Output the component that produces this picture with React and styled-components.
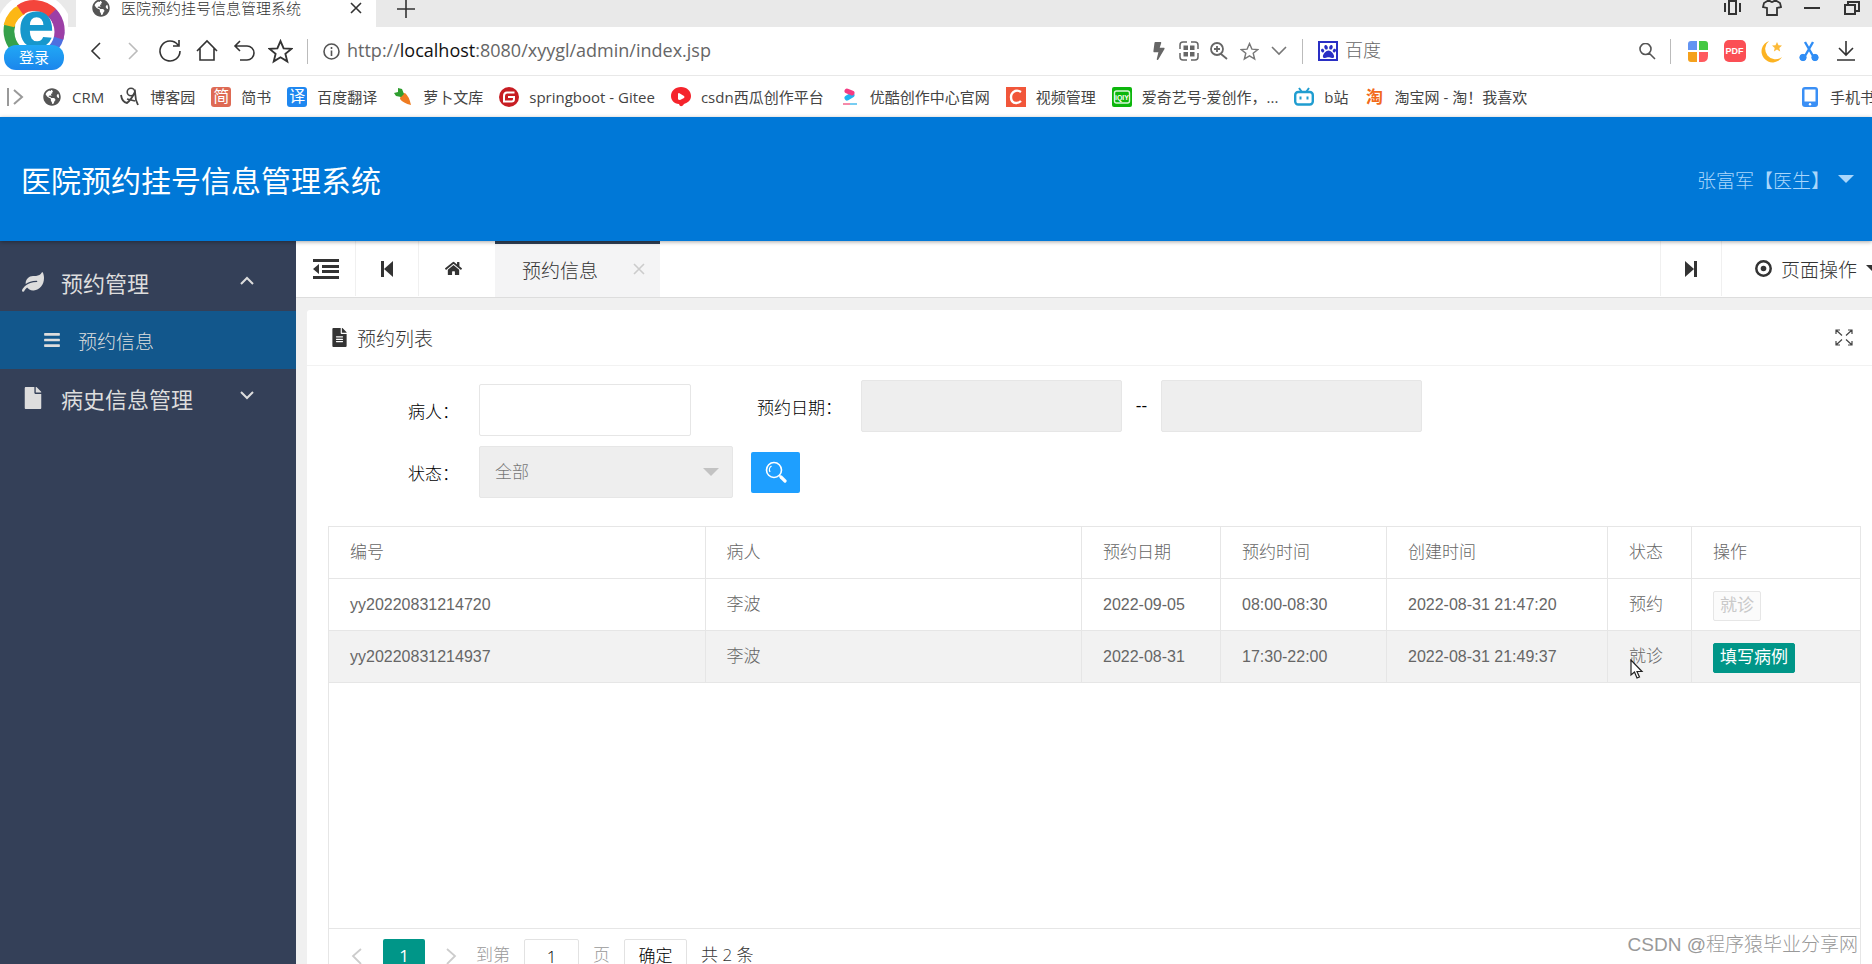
import React from "react";
import styled, { createGlobalStyle } from "styled-components";
import {
  FaBars,
  FaBolt,
  FaFile,
  FaFileAlt,
  FaGlobeAmericas,
  FaHome,
  FaLeaf,
  FaPaw,
} from "react-icons/fa";

const COLUMNS = [
  { key: "no", title: "编号", numeric: true },
  { key: "patient", title: "病人" },
  { key: "date", title: "预约日期", width: 139, numeric: true },
  { key: "time", title: "预约时间", width: 166, numeric: true },
  { key: "created", title: "创建时间", width: 221, numeric: true },
  { key: "status", title: "状态", width: 84 },
];

const APPOINTMENTS = [
  {
    no: "yy20220831214720",
    patient: "李波",
    date: "2022-09-05",
    time: "08:00-08:30",
    created: "2022-08-31 21:47:20",
    status: "预约",
    action: "就诊",
    disabled: true,
  },
  {
    no: "yy20220831214937",
    patient: "李波",
    date: "2022-08-31",
    time: "17:30-22:00",
    created: "2022-08-31 21:49:37",
    status: "就诊",
    action: "填写病例",
    active: true,
  },
];

const BOOKMARKS = [
  { label: "CRM", icon: <FaGlobeAmericas size={18} color="#555" /> },
  { label: "博客园", icon: <CnblogsIcon /> },
  { label: "简书", badge: "简", color: "#de6a54" },
  { label: "百度翻译", badge: "译", color: "#1e87f0" },
  { label: "萝卜文库", icon: <CarrotIcon /> },
  { label: "springboot - Gitee", icon: <GiteeIcon /> },
  { label: "csdn西瓜创作平台", icon: <XiguaIcon /> },
  { label: "优酷创作中心官网", icon: <YoukuIcon /> },
  { label: "视频管理", icon: <CsdnIcon /> },
  { label: "爱奇艺号-爱创作，...", icon: <IqiyiIcon /> },
  { label: "b站", icon: <BiliIcon /> },
  { label: "淘宝网 - 淘！我喜欢", icon: <TaobaoIcon /> },
];

export default function App() {
  return (
    <>
      <GlobalStyle />
      <Window>
        <BrowserBar />
        <Header>
          <Title>医院预约挂号信息管理系统</Title>
          <UserButton type="button">
            张富军【医生】
            <Caret $color="#a9d6fb" />
          </UserButton>
        </Header>
        <Body>
          <Sidebar />
          <Main>
            <PageTabs />
            <Card>
              <CardHeader>
                <FaFileAlt size={19} />
                <CardTitle>预约列表</CardTitle>
                <button type="button" aria-label="全屏">
                  <ExpandIcon />
                </button>
              </CardHeader>
              <SearchForm />
              <AppointmentTable />
            </Card>
          </Main>
        </Body>
        <Watermark>CSDN @程序猿毕业分享网</Watermark>
      </Window>
    </>
  );
}

function BrowserBar() {
  return (
    <Browser>
      <TabStrip>
        <BrowserTab>
          <FaGlobeAmericas size={18} color="#555" />
          <TabTitle>医院预约挂号信息管理系统</TabTitle>
          <TabClose type="button" aria-label="关闭标签页">
            <CloseIcon size={12} />
          </TabClose>
        </BrowserTab>
        <NewTab type="button" aria-label="新标签页">
          <Line size={18} d="M9 0V18M0 9H18" />
        </NewTab>
        <WindowButtons>
          <ToolButton type="button" $width={40} aria-label="分屏">
            <Line size={17} w={2} d="M5 2H12V15H5ZM1 4V13M16 4V13" />
          </ToolButton>
          <ToolButton type="button" $width={40} aria-label="皮肤">
            <Line
              size={20}
              w={1.8}
              d="M7 2Q10 6 13 2L18 5L19 9L15 10V17H5V10L1 9L2 5Z"
            />
          </ToolButton>
          <ToolButton type="button" $width={40} aria-label="最小化">
            <Line size={16} w={2} d="M0 8H16" />
          </ToolButton>
          <ToolButton type="button" $width={40} aria-label="还原">
            <Line size={16} w={2} d="M1 5H11V14H1ZM4 5V2H15V11H11" />
          </ToolButton>
        </WindowButtons>
      </TabStrip>

      <AddressRow>
        <ToolButton type="button" aria-label="后退">
          <Line size={20} d="M14 2L6 10L14 18" />
        </ToolButton>
        <ToolButton type="button" aria-label="前进" $color="#bbb">
          <Line size={20} d="M6 2L14 10L6 18" />
        </ToolButton>
        <ToolButton type="button" aria-label="刷新">
          <Line size={24} d="M20 6A10 10 0 1 0 22 12M21 1V7H15" />
        </ToolButton>
        <ToolButton type="button" aria-label="主页">
          <Line size={24} d="M2 12L12 2L22 12M5 9V21H19V9" />
        </ToolButton>
        <ToolButton type="button" aria-label="恢复">
          <Line size={24} d="M8 2L3 7L8 12M3 7H15A7 7 0 0 1 15 21H8" />
        </ToolButton>
        <ToolButton type="button" aria-label="收藏">
          <StarIcon size={25} />
        </ToolButton>
        <Divider />
        <InfoIcon />
        <Address role="textbox" aria-label="地址">
          http://<b>localhost</b>:8080/xyygl/admin/index.jsp
        </Address>
        <ToolButton type="button" $width={30} $color="#666" aria-label="极速">
          <FaBolt size={18} />
        </ToolButton>
        <ToolButton type="button" $width={30} $color="#666" aria-label="二维码">
          <QrIcon />
        </ToolButton>
        <ToolButton type="button" $width={30} $color="#666" aria-label="缩放">
          <Line
            size={18}
            w={1.8}
            d="M13 7A6 6 0 1 1 1 7A6 6 0 1 1 13 7M11 12L17 17M4 7H10M7 4V10"
          />
        </ToolButton>
        <ToolButton type="button" $width={30} $color="#777" aria-label="星标">
          <StarIcon size={19} />
        </ToolButton>
        <ToolButton type="button" $width={30} $color="#777" aria-label="更多">
          <Line size={16} d="M1 4L8 11L15 4" />
        </ToolButton>
        <Divider />
        <BaiduBadge>
          <FaPaw size={15} />
        </BaiduBadge>
        <EngineInput aria-label="搜索" placeholder="百度" />
        <ToolButton type="button" $width={30} $color="#555" aria-label="搜索">
          <Line size={17} d="M12 6A5 5 0 1 1 1 6A5 5 0 1 1 12 6M10 10L16 16" />
        </ToolButton>
        <Divider $tight />
        <ToolButton type="button" aria-label="应用">
          <AppsIcon />
        </ToolButton>
        <ToolButton type="button" aria-label="PDF">
          <PdfMark>PDF</PdfMark>
        </ToolButton>
        <ToolButton type="button" aria-label="夜间模式">
          <MoonIcon />
        </ToolButton>
        <ToolButton type="button" aria-label="截图">
          <ScissorsIcon />
        </ToolButton>
        <ToolButton type="button" aria-label="下载">
          <Line size={22} d="M11 1V15M4 8L11 15L18 8M2 20H20" />
        </ToolButton>
      </AddressRow>

      <BookmarkRow>
        <Line size={20} w={2} color="#999" d="M2 1V19M8 3L16 10L8 17" />
        {BOOKMARKS.map((item) => (
          <Bookmark key={item.label} href="#">
            <BookmarkIcon>
              {item.badge ? (
                <Badge $color={item.color}>{item.badge}</Badge>
              ) : (
                item.icon
              )}
            </BookmarkIcon>
            {item.label}
          </Bookmark>
        ))}
        <PhoneBookmark href="#">
          <BookmarkIcon>
            <PhoneIcon />
          </BookmarkIcon>
          手机书签
        </PhoneBookmark>
      </BookmarkRow>

      <Login type="button">
        <BrowserLogo />
        <LoginLabel>登录</LoginLabel>
      </Login>
    </Browser>
  );
}

function Sidebar() {
  return (
    <Side>
      <SideItem href="#">
        <FaLeaf size={22} />
        <span>预约管理</span>
        <Line size={14} w={2} d="M1 9L7 3L13 9" />
      </SideItem>
      <SubItem href="#">
        <FaBars size={18} />
        <span>预约信息</span>
      </SubItem>
      <SideItem href="#">
        <FaFile size={22} />
        <span>病史信息管理</span>
        <Line size={14} w={2} d="M1 1L7 7L13 1" />
      </SideItem>
    </Side>
  );
}

function PageTabs() {
  return (
    <TabBar>
      <TabCell type="button" $width={60} aria-label="收起菜单">
        <svg width="26" height="20" viewBox="0 0 26 20" fill="currentColor">
          <path d="M0 0H26V3H0ZM9 6H26V9H9ZM9 11H26V14H9ZM0 17H26V20H0ZM6 5V15L0 10Z" />
        </svg>
      </TabCell>
      <TabCell type="button" $width={63} aria-label="上一个">
        <svg width="12" height="16" viewBox="0 0 12 16" fill="currentColor">
          <path d="M0 0H3V16H0ZM12 0V16L3 8Z" />
        </svg>
      </TabCell>
      <TabCell type="button" $width={68} $plain aria-label="首页">
        <FaHome size={17} />
      </TabCell>
      <ActiveTab>
        预约信息
        <button type="button" aria-label="关闭">
          <CloseIcon size={12} />
        </button>
      </ActiveTab>
      <Spacer />
      <TabCell type="button" $width={62} $left aria-label="下一个">
        <svg width="12" height="16" viewBox="0 0 12 16" fill="currentColor">
          <path d="M9 0H12V16H9ZM0 0L9 8L0 16Z" />
        </svg>
      </TabCell>
      <PageActions type="button">
        <svg width="17" height="17" viewBox="0 0 17 17">
          <circle cx="8.5" cy="8.5" r="7.2" fill="none" stroke="#333" strokeWidth="2.5" />
          <circle cx="8.5" cy="8.5" r="2.8" fill="#333" />
        </svg>
        <span>页面操作</span>
        <Caret $color="#333" />
      </PageActions>
    </TabBar>
  );
}

function SearchForm() {
  return (
    <Form>
      <FormRow>
        <Field $low>
          <Label htmlFor="patient">病人：</Label>
          <PatientInput id="patient" />
        </Field>
        <Field>
          <DateLabel htmlFor="start">预约日期：</DateLabel>
          <DateInput id="start" readOnly />
          <Dash>--</Dash>
          <DateInput id="end" readOnly aria-label="结束日期" />
        </Field>
      </FormRow>
      <FormRow>
        <Field>
          <Label htmlFor="status">状态：</Label>
          <SelectWrap>
            <Select id="status">
              <option>全部</option>
            </Select>
            <Caret $color="#c2c2c2" />
          </SelectWrap>
          <SearchButton type="button" aria-label="查询">
            <svg width="22" height="22" viewBox="0 0 22 22" fill="none" stroke="#fff">
              <circle cx="9" cy="9" r="7.5" strokeWidth="1.6" />
              <path d="M5 11A4.5 4.5 0 0 1 6.5 5" strokeWidth="1.3" />
              <path d="M14.5 14.5L16 16" strokeWidth="1.5" />
              <path d="M16 16L20 20" strokeWidth="3.2" strokeLinecap="round" />
            </svg>
          </SearchButton>
        </Field>
      </FormRow>
    </Form>
  );
}

function AppointmentTable() {
  return (
    <TableBox>
      <Table>
        <colgroup>
          {COLUMNS.map((col) => (
            <col key={col.key} width={col.width} />
          ))}
          <col width="168" />
        </colgroup>
        <thead>
          <Row>
            {COLUMNS.map((col) => (
              <HeadCell key={col.key}>{col.title}</HeadCell>
            ))}
            <HeadCell>操作</HeadCell>
          </Row>
        </thead>
        <tbody>
          {APPOINTMENTS.map((item) => (
            <Row key={item.no} $active={item.active}>
              {COLUMNS.map((col) => (
                <Cell key={col.key} $numeric={col.numeric}>
                  {item[col.key]}
                  {item.active && col.key === "status" && <Pointer />}
                </Cell>
              ))}
              <Cell>
                <ActionButton type="button" disabled={item.disabled}>
                  {item.action}
                </ActionButton>
              </Cell>
            </Row>
          ))}
        </tbody>
      </Table>
      <Spacer />
      <Pager>
        <PageArrow type="button" aria-label="上一页">
          <Line size={18} w={1.8} d="M13 2L5 9L13 17" />
        </PageArrow>
        <CurrentPage type="button">1</CurrentPage>
        <PageArrow type="button" aria-label="下一页">
          <Line size={18} w={1.8} d="M5 2L13 9L5 17" />
        </PageArrow>
        <PageLabel htmlFor="page">到第</PageLabel>
        <PageInput id="page" defaultValue="1" />
        <PageLabel htmlFor="page">页</PageLabel>
        <ConfirmButton type="button">确定</ConfirmButton>
        <Total>共 2 条</Total>
      </Pager>
    </TableBox>
  );
}

/* icons */

function Line({ size, d, w = 1.6, color = "currentColor" }) {
  return (
    <svg
      width={size}
      height={size}
      viewBox={`0 0 ${size} ${size}`}
      fill="none"
      stroke={color}
      strokeWidth={w}
    >
      <path d={d} />
    </svg>
  );
}

function CloseIcon({ size }) {
  const end = size - 1;
  return <Line size={size} d={`M1 1L${end} ${end}M${end} 1L1 ${end}`} />;
}

function StarIcon({ size }) {
  return (
    <svg width={size} height={size} viewBox="0 0 24 24" fill="none" stroke="currentColor" strokeWidth="1.8">
      <path d="M12 2L15 9L22.5 9.5L16.7 14.3L18.5 21.5L12 17.5L5.5 21.5L7.3 14.3L1.5 9.5L9 9Z" />
    </svg>
  );
}

function InfoIcon() {
  return (
    <svg width="17" height="17" viewBox="0 0 17 17" fill="none" stroke="#555" strokeWidth="1.6">
      <circle cx="8.5" cy="8.5" r="7.5" />
      <path d="M8.5 7.5V13M8.5 4V6" />
    </svg>
  );
}

function QrIcon() {
  return (
    <svg width="20" height="20" viewBox="0 0 20 20" fill="none" stroke="currentColor" strokeWidth="1.5">
      <path d="M1 8V4Q1 1 4 1H8M12 1H16Q19 1 19 4V8M19 12V16Q19 19 16 19H12M8 19H4Q1 19 1 16V12" />
      <path
        d="M4.5 4.5H9V9H4.5ZM11 4.5H15.5V9H11ZM4.5 11H9V15.5H4.5ZM11 11H15.5V15.5H11Z"
        fill="currentColor"
        stroke="none"
      />
    </svg>
  );
}

function AppsIcon() {
  return (
    <svg width="20" height="21" viewBox="0 0 20 21">
      <path d="M3 0H9V9H0V3Q0 0 3 0Z" fill="#6394f2" />
      <path d="M11 0H17Q20 0 20 3V9H11Z" fill="#45c843" />
      <path d="M0 11H9V21H3Q0 21 0 18Z" fill="#f5a11c" />
      <path d="M11 11H20V15Q20 21 14 21H11Z" fill="#ff5a5f" />
    </svg>
  );
}

function MoonIcon() {
  return (
    <svg width="22" height="23" viewBox="0 0 22 23" fill="#fcb322">
      <path d="M8 1A11 11 0 1 0 21 17A9.5 9.5 0 0 1 8 1Z" />
      <path
        d="M16 2L17.5 5.3L21 5.6L18.3 8L19.2 11.5L16 9.6L12.9 11.5L13.7 8L11 5.600L14.5 5.3Z"
        opacity=".9"
      />
    </svg>
  );
}

function ScissorsIcon() {
  return (
    <svg width="20" height="21" viewBox="0 0 20 21" fill="#2f8df5" stroke="#2f8df5">
      <path d="M6 1L14 15M14 1L6 15" strokeWidth="2.4" />
      <circle cx="4" cy="16.5" r="3.2" />
      <circle cx="16" cy="16.5" r="3.2" />
    </svg>
  );
}

function CnblogsIcon() {
  return (
    <svg width="20" height="20" viewBox="0 0 20 20" fill="none" stroke="#444">
      <circle cx="11" cy="5" r="3.8" strokeWidth="1.6" />
      <path d="M1 8Q2 15 7 16Q11 13 15 5L16 13L18 18M7 12L15 14" strokeWidth="1.8" />
    </svg>
  );
}

function CarrotIcon() {
  return (
    <svg width="18" height="18" viewBox="0 0 18 18">
      <path d="M7 6L11 5Q15 8 17 17Q9 15 6 11Z" fill="#ef7c22" />
      <path d="M7 9L2 8L0 5L4 4L4 0L8 1L10 6Z" fill="#2f9e2f" />
    </svg>
  );
}

function GiteeIcon() {
  return (
    <svg width="20" height="20" viewBox="0 0 20 20">
      <circle cx="10" cy="10" r="10" fill="#c71d23" />
      <path d="M15.5 5.5H8Q5 5.5 5 9V14.5H12.5Q15 14.5 15 12V10H9" fill="none" stroke="#fff" strokeWidth="2" />
    </svg>
  );
}

function XiguaIcon() {
  return (
    <svg width="20" height="20" viewBox="0 0 20 20">
      <path d="M10 0C16 0 20 4 20 9C20 14 16 16 13 17C11 20 9 20 8 17C3 17 0 13 0 9C0 4 4 0 10 0Z" fill="#f5242c" />
      <path d="M7 7Q7 6 8 6L13 9Q14 10 13 11L9 13Q7 13 7 12Z" fill="#fff" />
    </svg>
  );
}

function YoukuIcon() {
  return (
    <svg width="16" height="20" viewBox="0 0 16 20">
      <path d="M5 11L10 8" stroke="#22b3f0" strokeWidth="5" strokeLinecap="round" />
      <path d="M5 4L10 6" stroke="#f43b82" strokeWidth="5" strokeLinecap="round" />
      <path d="M1 17H8" stroke="#f58aaa" strokeWidth="2" />
      <path d="M8 17H15" stroke="#77cdf2" strokeWidth="2" />
    </svg>
  );
}

function CsdnIcon() {
  return (
    <svg width="20" height="20" viewBox="0 0 20 20">
      <rect width="20" height="20" fill="#f1563a" />
      <path d="M15 5Q12 3 9 4Q5 6 5 10Q5 16 10 16Q13 16 15 14" fill="none" stroke="#fff" strokeWidth="2.4" />
    </svg>
  );
}

function IqiyiIcon() {
  return (
    <svg width="20" height="20" viewBox="0 0 20 20">
      <rect width="20" height="20" rx="2" fill="#0cb60c" />
      <rect x="2.5" y="4" width="15" height="12" rx="2" fill="none" stroke="#d8f7d8" strokeWidth="1.4" />
      <text
        x="10"
        y="13"
        fontSize="7"
        fontWeight="700"
        fontFamily="Liberation Sans, sans-serif"
        textAnchor="middle"
        fill="#fff"
      >
        iQIY
      </text>
    </svg>
  );
}

function BiliIcon() {
  return (
    <svg width="20" height="20" viewBox="0 0 20 20" fill="none" stroke="#1f9dd0" strokeWidth="2.4">
      <rect x="1.2" y="5" width="17.6" height="12.5" rx="3" />
      <path d="M5 1L7.5 4.5M15 1L12.5 4.5M6.5 9.5V12.5M13.5 9.5V12.5" strokeWidth="2" />
    </svg>
  );
}

function TaobaoIcon() {
  return <TaobaoMark>淘</TaobaoMark>;
}

function PhoneIcon() {
  return (
    <svg width="16" height="20" viewBox="0 0 16 20">
      <rect width="16" height="20" rx="3" fill="#3a8ff5" />
      <rect x="2.5" y="2.5" width="11" height="12" fill="#fff" />
      <circle cx="8" cy="17.3" r="1.2" fill="#fff" />
    </svg>
  );
}

function ExpandIcon() {
  return (
    <svg width="18" height="17" viewBox="0 0 18 17" fill="none" stroke="#444" strokeWidth="1.2">
      <path d="M1 5V1H5M1 1L7 6.5M13 1H17V5M17 1L11 6.5M1 12V16H5M1 16L7 10.5M17 12V16H13M17 16L11 10.5" />
    </svg>
  );
}

function BrowserLogo() {
  return (
    <svg width="68" height="70" viewBox="0 0 68 70">
      <circle cx="34" cy="31" r="38" fill="#fff" />
      <g fill="none" strokeWidth="11">
        <path d="M18 50A25 25 0 0 1 10 24" stroke="#35a14b" />
        <path d="M59 32A25 25 0 0 1 50 50" stroke="#4e6fe0" />
        <path d="M50 11A25 25 0 0 1 58 38" stroke="#9c3fa6" />
        <path d="M9 26A25 25 0 0 1 23 9" stroke="#fcb715" />
        <path d="M20 10A25 25 0 0 1 52 13" stroke="#f4453c" />
      </g>
      <circle cx="34.5" cy="32" r="20" fill="#fff" />
      <text
        x="36"
        y="47"
        fontSize="66"
        fontWeight="700"
        fontFamily="Liberation Sans, sans-serif"
        textAnchor="middle"
        fill="#1697cc"
      >
        e
      </text>
    </svg>
  );
}

function Pointer() {
  return (
    <PointerSvg width="14" height="21" viewBox="0 0 14 21">
      <path d="M1 1V16L4.5 13L7 19L9.5 18L7 12.5H12Z" fill="#fff" stroke="#222" strokeWidth="1.2" />
    </PointerSvg>
  );
}

/* styles */

const GlobalStyle = createGlobalStyle`
  * {
    box-sizing: border-box;
  }

  body {
    margin: 0;
    background: #f0f0f0;
    font-family: "Liberation Sans", "Noto Sans CJK SC", sans-serif;
    font-size: 17px;
    font-weight: 300;
    color: #333;
  }

  button, input, select {
    font: inherit;
    color: inherit;
  }

  button {
    padding: 0;
    border: none;
    background: none;
    cursor: pointer;
  }

  a {
    color: inherit;
    text-decoration: none;
  }

  svg {
    display: block;
    flex-shrink: 0;
  }
`;

const Window = styled.div`
  position: relative;
  display: flex;
  flex-direction: column;
  height: 100vh;
  overflow: hidden;
`;

const Browser = styled.div`
  position: relative;
  flex-shrink: 0;
  background: #fff;
  font-family: "Open Sans", "Noto Sans CJK SC", sans-serif;
  overflow: hidden;
`;

const TabStrip = styled.div`
  display: flex;
  height: 27px;
  padding-left: 76px;
  background: #e9e9e9;
`;

const BrowserTab = styled.div`
  display: flex;
  align-items: center;
  width: 300px;
  padding: 0 14px 12px 16px;
  background: #fff;
`;

const TabTitle = styled.span`
  margin-left: 11px;
  font-size: 15px;
  line-height: 20px;
`;

const TabClose = styled.button`
  margin-left: auto;
`;

const NewTab = styled.button`
  padding: 0 0 15px 21px;
`;

const WindowButtons = styled.div`
  display: flex;
  margin-left: auto;
  padding-bottom: 12px;
`;

const ToolButton = styled.button`
  display: flex;
  flex-shrink: 0;
  align-items: center;
  justify-content: center;
  width: ${(props) => props.$width || 37}px;
  color: ${(props) => props.$color || "#333"};
`;

const AddressRow = styled.div`
  display: flex;
  align-items: center;
  height: 49px;
  padding: 0 8px 0 77px;
  border-bottom: 1px solid #e8e8e8;
`;

const Divider = styled.span`
  flex-shrink: 0;
  width: 1px;
  height: 25px;
  margin: ${(props) => (props.$tight ? "0 8px" : "0 15px 0 8px")};
  background: #bbb;
`;

const Address = styled.div`
  flex: 1;
  margin-left: 7px;
  padding-bottom: 2px;
  font-size: 18px;
  font-weight: 400;
  color: #666;

  b {
    font-weight: 400;
    color: #111;
  }
`;

const BaiduBadge = styled.span`
  display: flex;
  flex-shrink: 0;
  align-items: center;
  justify-content: center;
  width: 20px;
  height: 20px;
  border: 2px solid #2a2fc4;
  color: #2a2fc4;
`;

const EngineInput = styled.input`
  width: 294px;
  padding: 0 0 2px 7px;
  border: none;
  outline: none;
  font-size: 18px;

  &::placeholder {
    color: #666;
  }
`;

const PdfMark = styled.span`
  width: 22px;
  height: 22px;
  border-radius: 5px;
  background: #fb4f55;
  font-family: "Liberation Sans", sans-serif;
  font-size: 9px;
  font-weight: 700;
  line-height: 23px;
  color: #fff;
`;

const BookmarkRow = styled.div`
  display: flex;
  align-items: center;
  gap: 16px;
  height: 41px;
  padding-left: 6px;
`;

const Bookmark = styled.a`
  display: flex;
  flex-shrink: 0;
  align-items: center;
  gap: 10px;
  font-size: 15px;
  font-weight: 400;
  line-height: 20px;
  color: #444;
`;

const PhoneBookmark = styled(Bookmark)`
  margin-left: auto;
  margin-right: -18px;
`;

const BookmarkIcon = styled.span`
  display: flex;
  justify-content: center;
  width: 20px;
`;

const Badge = styled.span`
  width: 20px;
  height: 20px;
  border-radius: 3px;
  background: ${(props) => props.$color};
  font-size: 16px;
  line-height: 19px;
  text-align: center;
  color: #fff;
`;

const TaobaoMark = styled.span`
  font-size: 17px;
  font-weight: 700;
  color: #f26a1b;
`;

const Login = styled.button`
  position: absolute;
  top: 0;
  left: 0;
  height: 70px;
`;

const LoginLabel = styled.span`
  position: absolute;
  bottom: 0;
  left: 4px;
  width: 60px;
  height: 25px;
  border-radius: 12px;
  background: linear-gradient(#21a8f5, #1b86ec);
  font-size: 15px;
  font-weight: 400;
  line-height: 24px;
  color: #fff;
`;

const Header = styled.header`
  position: relative;
  z-index: 1;
  display: flex;
  flex-shrink: 0;
  align-items: center;
  justify-content: space-between;
  height: 124px;
  padding: 0 18px 0 21px;
  background: #0078d7;
  box-shadow: 0 1px 4px rgba(0, 0, 0, 0.35);
`;

const Title = styled.h1`
  margin: 0;
  font-size: 30px;
  font-weight: 400;
  color: #fff;
`;

const UserButton = styled.button`
  display: flex;
  align-items: center;
  gap: 8px;
  font-size: 19px;
  color: #a9d6fb;
`;

const Caret = styled.i`
  flex-shrink: 0;
  border: 8px solid transparent;
  border-top-color: ${(props) => props.$color};
  border-bottom: none;
`;

const Body = styled.div`
  display: flex;
  flex: 1;
  min-height: 0;
`;

const Side = styled.nav`
  flex-shrink: 0;
  width: 296px;
  padding-top: 12px;
  background: #344058;
`;

const SideItem = styled.a`
  display: flex;
  align-items: center;
  height: 58px;
  padding: 0 42px 0 22px;
  font-size: 22px;
  font-weight: 400;
  color: #ddd;

  span {
    flex: 1;
    margin-left: 17px;
  }
`;

const SubItem = styled(SideItem)`
  padding-left: 43px;
  background: #12578c;
  font-size: 19px;
  font-weight: 300;
`;

const Main = styled.main`
  display: flex;
  flex: 1;
  flex-direction: column;
  min-width: 0;
`;

const TabBar = styled.div`
  display: flex;
  flex-shrink: 0;
  height: 57px;
  border-bottom: 1px solid #ddd;
  background: #fff;
`;

const TabCell = styled.button`
  display: flex;
  align-items: center;
  justify-content: center;
  width: ${(props) => props.$width}px;
  height: 55px;
  border-right: ${(props) => (props.$plain ? "none" : "1px solid #f0f0f0")};
  border-left: ${(props) => (props.$left ? "1px solid #f0f0f0" : "none")};
`;

const ActiveTab = styled.div`
  display: flex;
  align-items: center;
  justify-content: space-between;
  width: 165px;
  height: 56px;
  margin-left: 8px;
  padding: 0 15px 3px 27px;
  border-top: 3px solid #2f4056;
  background: #f4f4f5;
  font-size: 19px;

  button {
    color: #ccc;
  }
`;

const Spacer = styled.div`
  flex: 1;
`;

const PageActions = styled.button`
  display: flex;
  align-items: center;
  gap: 9px;
  width: 150px;
  height: 55px;
  padding-left: 33px;
  overflow: hidden;
  font-size: 19px;

  span {
    flex-shrink: 0;
  }
`;

const Card = styled.section`
  display: flex;
  flex: 1;
  flex-direction: column;
  min-height: 0;
  margin: 12px 0 0 11px;
  border-radius: 3px 0 0 0;
  background: #fff;
`;

const CardHeader = styled.header`
  display: flex;
  flex-shrink: 0;
  align-items: center;
  gap: 8px;
  height: 56px;
  padding: 0 19px 0 23px;
  border-bottom: 1px solid #f2f2f2;
`;

const CardTitle = styled.h2`
  flex: 1;
  margin: 0;
  font-size: 19px;
  font-weight: 300;
`;

const Form = styled.form`
  padding: 14px 0 28px 22px;
`;

const FormRow = styled.div`
  display: flex;
  align-items: flex-start;

  & + & {
    margin-top: 10px;
  }
`;

const Field = styled.div`
  display: flex;
  align-items: center;
  padding-top: ${(props) => (props.$low ? 4 : 0)}px;
`;

const Label = styled.label`
  width: 150px;
  padding-left: 79px;
  color: #000;
`;

const DateLabel = styled.label`
  width: 170px;
  padding-left: 66px;
  color: #000;
`;

const TextInput = styled.input`
  height: 52px;
  padding: 0 12px;
  border: 1px solid #e6e6e6;
  border-radius: 2px;
  outline: none;
`;

const PatientInput = styled(TextInput)`
  width: 212px;
`;

const DateInput = styled(TextInput)`
  width: 261px;
  background: #eee;
`;

const Dash = styled.span`
  width: 39px;
  text-align: center;
  color: #000;
`;

const SelectWrap = styled.div`
  position: relative;
  width: 254px;

  i {
    position: absolute;
    top: 22px;
    right: 14px;
    pointer-events: none;
  }
`;

const Select = styled.select`
  appearance: none;
  width: 100%;
  height: 52px;
  padding: 0 15px;
  border: 1px solid #e6e6e6;
  border-radius: 2px;
  background: #eee;
  color: #777;
`;

const SearchButton = styled.button`
  display: flex;
  align-items: center;
  justify-content: center;
  width: 49px;
  height: 41px;
  margin-left: 18px;
  border-radius: 2px;
  background: #1e9fff;
`;

const TableBox = styled.div`
  display: flex;
  flex: 1;
  flex-direction: column;
  min-height: 0;
  margin: 0 11px 0 21px;
  border: 1px solid #e6e6e6;
  border-bottom: none;
`;

const Table = styled.table`
  width: 100%;
  table-layout: fixed;
  border-collapse: separate;
  border-spacing: 0;
  color: #666;
`;

const Row = styled.tr`
  background: ${(props) => (props.$active ? "#f2f2f2" : "#fff")};
`;

const Cell = styled.td`
  position: relative;
  height: 52px;
  padding: 0 20px 0 21px;
  border-right: 1px solid #e6e6e6;
  border-bottom: 1px solid #e6e6e6;
  font-size: ${(props) => (props.$numeric ? 16 : 17)}px;
  line-height: 24px;
  white-space: nowrap;

  &:last-child {
    border-right: none;
  }
`;

const HeadCell = styled(Cell).attrs({ as: "th" })`
  font-size: 17px;
  font-weight: 300;
  text-align: left;
`;

const PointerSvg = styled.svg`
  position: absolute;
  top: 28px;
  left: 22px;
`;

const ActionButton = styled.button`
  display: block;
  height: 30px;
  margin-top: 2px;
  padding: 0 6px;
  border: 1px solid #009688;
  border-radius: 2px;
  background: #009688;
  font-weight: 400;
  line-height: 28px;
  color: #fff;

  &:disabled {
    border-color: #e6e6e6;
    background: #fbfbfb;
    color: #c9c9c9;
  }
`;

const Pager = styled.div`
  display: flex;
  flex-shrink: 0;
  align-items: flex-start;
  height: 36px;
  padding: 10px 0 0 12px;
  border-top: 1px solid #e6e6e6;
  font-family: "Open Sans", "Noto Sans CJK SC", sans-serif;
  overflow: hidden;
  line-height: 32px;
`;

const PageArrow = styled.button`
  display: flex;
  align-items: center;
  justify-content: center;
  width: 32px;
  height: 34px;
  color: #ccc;
`;

const CurrentPage = styled.button`
  width: 42px;
  height: 34px;
  margin: 0 10px;
  border-radius: 2px;
  background: #009688;
  font-weight: 400;
  color: #fff;
`;

const PageLabel = styled.label`
  color: #999;

  button + & {
    padding-left: 9px;
  }
`;

const PageInput = styled.input`
  width: 55px;
  height: 34px;
  margin: 0 14px;
  padding: 0;
  border: 1px solid #e2e2e2;
  border-radius: 2px;
  text-align: center;
  color: #000;
`;

const ConfirmButton = styled.button`
  width: 63px;
  height: 34px;
  margin: 0 14px;
  border: 1px solid #e2e2e2;
  border-radius: 2px;
  color: #000;
`;

const Total = styled.span`
  color: #333;
`;

const Watermark = styled.div`
  position: absolute;
  right: 14px;
  bottom: 5px;
  z-index: 2;
  font-size: 19px;
  line-height: 28px;
  color: #999;
`;
